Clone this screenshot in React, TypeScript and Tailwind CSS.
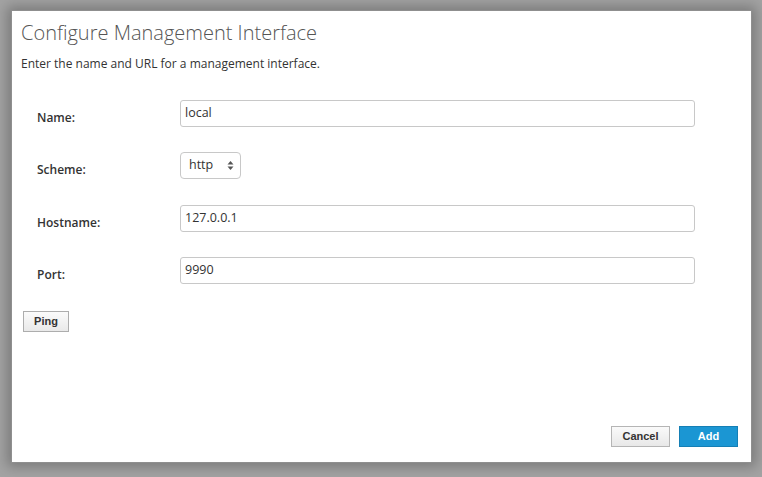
import React from "react";

const font = { fontFamily: '"Open Sans", "Noto Sans", sans-serif' };
const btnFont = { fontFamily: '"Liberation Sans", Arial, sans-serif' };

function Row({ label, children, className = "" }: { label: string; children: React.ReactNode; className?: string }) {
  return (
    <div className={`flex items-start h-[27px] ${className}`}>
      <div className="w-[143px] pt-[10px] text-[12px] leading-[16px] font-semibold text-[#333]">
        {label}
      </div>
      {children}
    </div>
  );
}

function TextBox({ value }: { value: string }) {
  return (
    <div className="w-[515px] h-[27px] border border-[#c8c8c8] rounded-[3px] bg-white flex items-center pl-[4px] text-[12.5px] text-[#333]">
      {value}
    </div>
  );
}

export default function App() {
  return (
    <div className="w-[762px] h-[477px] bg-[#a3a3a3] pt-[10px] pl-[11px] overflow-hidden" style={font}>
      <div className="w-[741px] h-[453px] bg-white shadow-[0_0_12px_4px_rgba(0,0,0,0.25)] border border-[#8f8f8f] flex flex-col">
        <div className="pl-[9px] pt-[8px] text-[20px] leading-[28px] font-light text-[#555]">
          Configure Management Interface
        </div>
        <div className="pl-[9px] mt-[8px] text-[12px] leading-[18px] text-[#333]">
          Enter the name and URL for a management interface.
        </div>

        <div className="mt-[27px] pl-[25px] flex flex-col">
          <Row label="Name:">
            <TextBox value="local" />
          </Row>
          <Row label="Scheme:" className="mt-[25px]">
            <div className="w-[61px] h-[27px] border border-[#c8c8c8] rounded-[4px] bg-white flex items-center justify-between pl-[8px] pr-[6px] text-[12.5px] text-[#333]">
              <span>http</span>
              <svg width="7" height="11" viewBox="0 0 7 11">
                <path d="M3.5 1 L6.5 4.5 L0.5 4.5 Z" fill="#555" />
                <path d="M3.5 10 L6.5 6.5 L0.5 6.5 Z" fill="#555" />
              </svg>
            </div>
          </Row>
          <Row label="Hostname:" className="mt-[26px]">
            <TextBox value="127.0.0.1" />
          </Row>
          <Row label="Port:" className="mt-[25px]">
            <TextBox value="9990" />
          </Row>
        </div>

        <div className="mt-[27px] pl-[11px] flex">
          <button
            className="w-[46px] h-[21px] border border-[#adadad] bg-gradient-to-b from-[#fbfbfb] to-[#e9e9e9] text-[11px] leading-none font-bold text-[#333]"
            style={btnFont}
          >
            Ping
          </button>
        </div>

        <div className="mt-auto mb-[15px] pr-[13px] flex justify-end gap-[9px]" style={btnFont}>
          <button className="w-[59px] h-[21px] border border-[#b5b5b5] bg-gradient-to-b from-[#fafafa] to-[#e8e8e8] text-[11px] leading-none font-bold text-[#333]">
            Cancel
          </button>
          <button className="w-[59px] h-[21px] border border-[#157fb5] bg-[#1b96d3] text-[11px] leading-none font-bold text-white">
            Add
          </button>
        </div>
      </div>
    </div>
  );
}
